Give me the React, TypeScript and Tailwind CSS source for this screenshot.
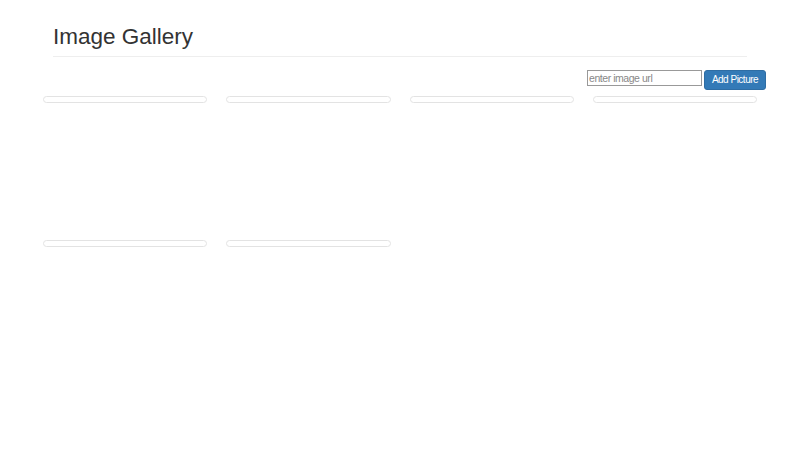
import React from "react";

export default function App() {
  const items = [0, 1, 2, 3, 4, 5];
  return (
    <div className="w-[800px] h-[450px] bg-white text-[#333]" style={{ fontFamily: '"Liberation Sans", Arial, sans-serif' }}>
      <div className="mx-[53px] pt-[22px] border-b border-[#eee] pb-[5px]">
        <h1 className="text-[22.5px] leading-[29px] font-normal m-0">Image Gallery</h1>
      </div>
      <div className="flex justify-end items-start pr-[34px] pt-[13px] gap-[2px]">
        <input
          className="w-[115px] h-[16px] border border-[#999] px-[1px] text-[10.5px] tracking-[-0.45px] leading-[14px] placeholder-[#888] outline-none"
          placeholder="enter image url"
        />
        <button className="h-[20px] w-[62px] bg-[#337ab7] border border-[#2e6da4] rounded-[3px] text-white text-[10px] tracking-[-0.5px] leading-[18px]">
          Add Picture
        </button>
      </div>
      <div className="ml-[43px] mt-[6px] w-[714px] grid grid-cols-4 gap-x-[19px]">
        {items.map((i) => (
          <div key={i} className="h-[144px]">
            <div className="h-[7px] border border-[#e3e3e3] rounded-[4px] bg-white" />
          </div>
        ))}
      </div>
    </div>
  );
}
